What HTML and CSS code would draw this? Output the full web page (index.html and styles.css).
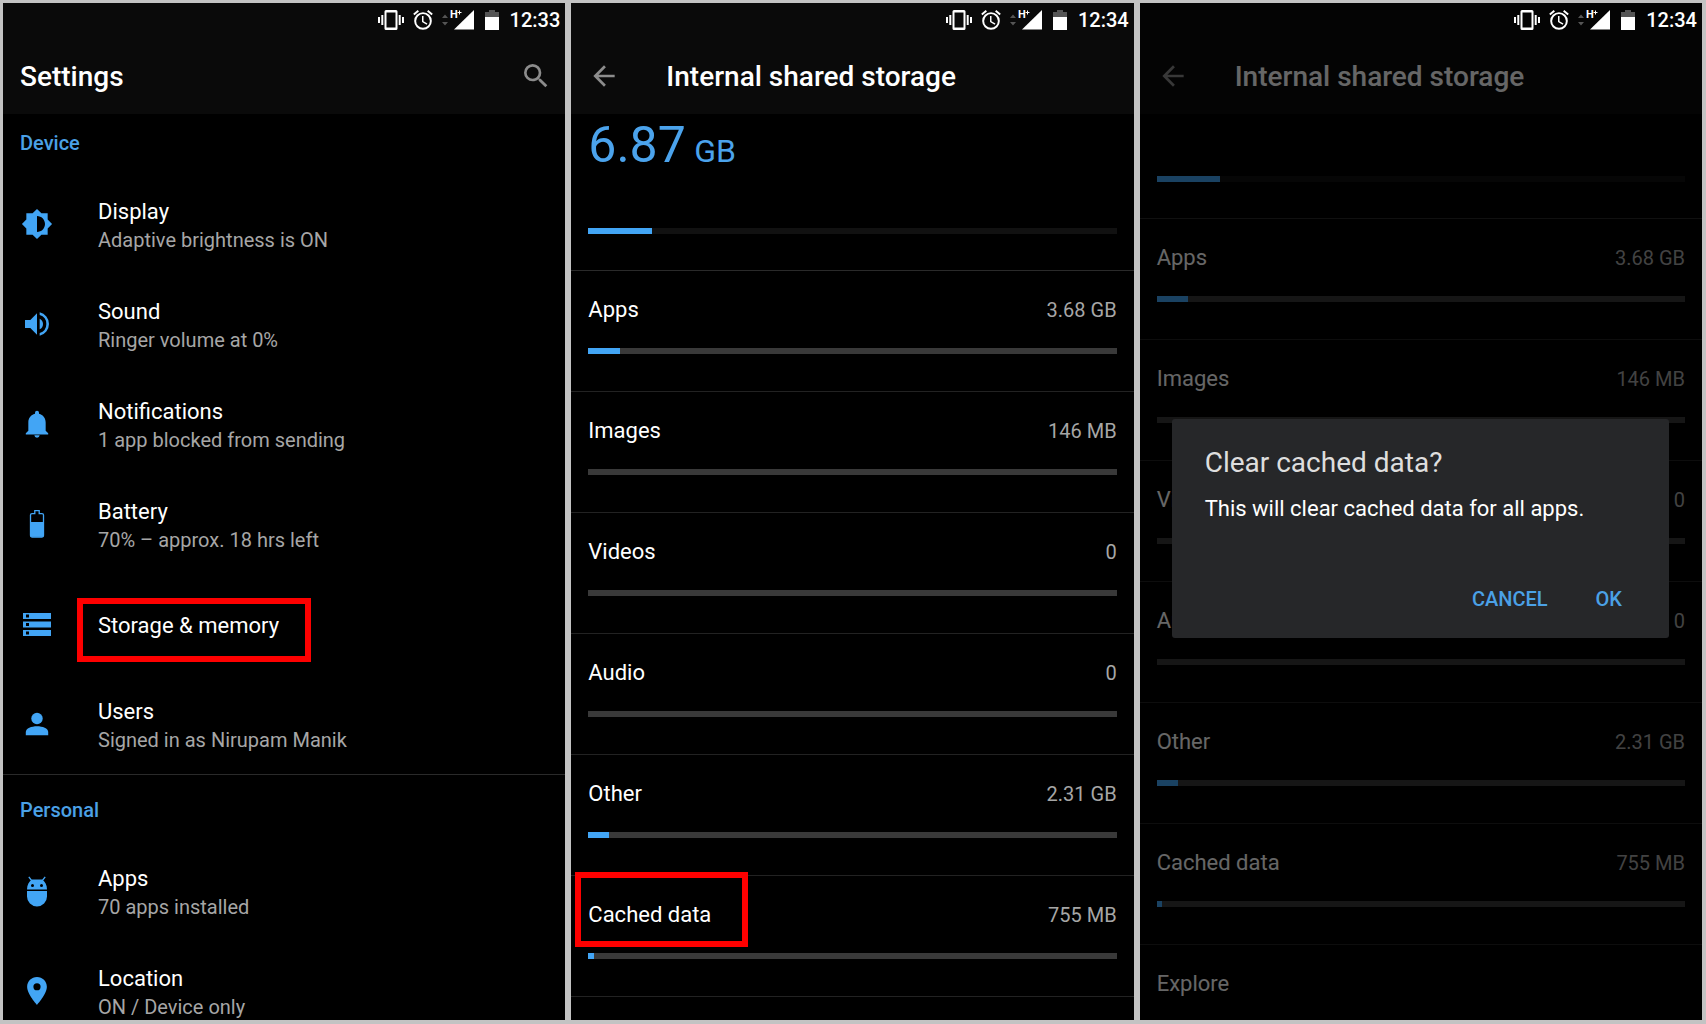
FILE: index.html
```html
<!DOCTYPE html>
<html lang="en">
<head>
    <meta charset="UTF-8">
    <meta name="viewport" content="width=device-width, initial-scale=1.0">
    <title>Clear cached data</title>
    <link rel="stylesheet" href="styles.css">
</head>
<body>
    <!-- Shared status bar icons -->
    <svg class="sprite" aria-hidden="true">
        <symbol id="vibrate" viewBox="0 0 26 20">
            <path fill="currentColor" fill-rule="evenodd" d="M8 0h10a1.500 1.500 0 0 1 1.500 1.500v17a1.500 1.500 0 0 1-1.500 1.500H8a1.500 1.500 0 0 1-1.500-1.500v-17A1.500 1.500 0 0 1 8 0zM8.500 2.500v15h9v-15z"/>
            <path fill="currentColor" d="M0 7h2v6H0zM3.300 5h2v10h-2zM20.700 5h2v10h-2zM24 7h2v6h-2z"/>
        </symbol>
        <symbol id="alarm" viewBox="2 1.800 20 20.400">
            <path fill="currentColor" d="M22 5.720l-4.600-3.860-1.290 1.530 4.600 3.860L22 5.720zM7.880 3.390L6.600 1.860 2 5.710l1.290 1.530 4.590-3.850zM12.500 8H11v6l4.750 2.850.75-1.230-4-2.370V8zM12 4a9 9 0 1 0 0 18 9 9 0 0 0 0-18zm0 16a7 7 0 1 1 0-14 7 7 0 0 1 0 14z"/>
        </symbol>
        <symbol id="signal" viewBox="0 0 32 20">
            <path fill="#555" d="M0 8l3-3.500L6 8zM0 12l3 3.500L6 12z"/>
            <path fill="currentColor" d="M32 0v19.500H12z"/>
            <text class="network" x="8" y="8">H</text>
            <path stroke="currentColor" stroke-width="1" d="M15.500 2.500h4M17.500 .5v4"/>
        </symbol>
        <symbol id="charge" viewBox="0 0 14 20">
            <path fill="#555" d="M4 0h6v2h4v5H0V2h4z"/>
            <path fill="currentColor" d="M0 7h14v13H0z"/>
        </symbol>
        <symbol id="back" viewBox="0 0 24 24">
            <path fill="currentColor" d="M20 11H7.830l5.590-5.590L12 4l-8 8 8 8 1.410-1.410L7.830 13H20v-2z"/>
        </symbol>
    </svg>

    <!-- Settings -->
    <section class="screen">
        <div class="status">
            <svg class="vibrate"><use href="#vibrate"/></svg>
            <svg class="alarm"><use href="#alarm"/></svg>
            <svg class="signal"><use href="#signal"/></svg>
            <svg class="charge"><use href="#charge"/></svg>
            <time class="clock">12:33</time>
        </div>
        <header class="appbar">
            <h1 class="title">Settings</h1>
            <button class="icon-button" aria-label="Search">
                <svg class="icon" viewBox="0 0 24 24"><path fill="currentColor" d="M15.500 14h-.79l-.28-.27A6.470 6.470 0 0 0 16 9.500 6.500 6.500 0 1 0 9.500 16c1.610 0 3.090-.59 4.230-1.570l.27.28v.79l5 4.990L20.490 19l-4.990-5zm-6 0a4.500 4.500 0 1 1 0-9 4.500 4.500 0 0 1 0 9z"/></svg>
            </button>
        </header>

        <div class="group">
            <h2 class="group-title">Device</h2>
            <a class="item" href="#display">
                <svg class="icon" viewBox="0 0 24 24"><path fill="currentColor" d="M20 15.310L23.310 12 20 8.690V4h-4.690L12 .69 8.690 4H4v4.690L.69 12 4 15.310V20h4.690L12 23.310 15.310 20H20v-4.690zM12 18V6c3.310 0 6 2.690 6 6s-2.690 6-6 6z"/></svg>
                <span class="item-text">
                    <span class="name">Display</span>
                    <span class="detail">Adaptive brightness is ON</span>
                </span>
            </a>
            <a class="item" href="#sound">
                <svg class="icon" viewBox="0 0 24 24"><path fill="currentColor" d="M3 9v6h4l5 5V4L7 9H3zm13.500 3A4.500 4.500 0 0 0 14 7.970v8.050A4.500 4.500 0 0 0 16.500 12zM14 3.230v2.060a7 7 0 0 1 0 13.420v2.060a9 9 0 0 0 0-17.540z"/></svg>
                <span class="item-text">
                    <span class="name">Sound</span>
                    <span class="detail">Ringer volume at 0%</span>
                </span>
            </a>
            <a class="item" href="#notifications">
                <svg class="icon" viewBox="0 0 24 24"><path fill="currentColor" d="M12 22.300a2 2 0 0 0 2-1.800h-4a2 2 0 0 0 2 1.800zM18.500 17V10.800c0-3.200-1.900-5.700-5-6.500v-.7a1.500 1.500 0 0 0-3 0v.7c-3.100.8-5 3.300-5 6.500V17l-1.900 1.900v.9h16.800v-.9z"/></svg>
                <span class="item-text">
                    <span class="name">Notifications</span>
                    <span class="detail">1 app blocked from sending</span>
                </span>
            </a>
            <a class="item" href="#battery">
                <svg class="icon" viewBox="0 0 32 32">
                    <path fill="none" stroke="currentColor" stroke-width="1.300" d="M11 5.600h2.800V2.700h4.400v2.900H21a1.500 1.500 0 0 1 1.500 1.500v20.400a1.500 1.500 0 0 1-1.500 1.500H11a1.500 1.500 0 0 1-1.500-1.500V7.100A1.500 1.500 0 0 1 11 5.600z"/>
                    <path fill="currentColor" d="M9.500 14h13v14.800h-13z"/>
                </svg>
                <span class="item-text">
                    <span class="name">Battery</span>
                    <span class="detail">70% – approx. 18 hrs left</span>
                </span>
            </a>
            <a class="item" href="#storage">
                <svg class="icon" viewBox="0 0 32 32"><path fill="currentColor" fill-rule="evenodd" d="M2 5h28v6H2zm3 1.500v3h3v-3zM2 13.500h28v6H2zM5 15v3h3v-3zM2 22h28v6H2zm3 1.500v3h3v-3z"/></svg>
                <span class="item-text">
                    <span class="name">Storage &amp; memory</span>
                </span>
                <span class="marker marker-storage"></span>
            </a>
            <a class="item" href="#users">
                <svg class="icon" viewBox="0 0 32 32"><circle fill="currentColor" cx="16" cy="10.500" r="5.700"/><path fill="currentColor" d="M4.800 27.200V24c0-3.700 5.600-5.800 11.200-5.800S27.200 20.300 27.200 24v3.200z"/></svg>
                <span class="item-text">
                    <span class="name">Users</span>
                    <span class="detail">Signed in as Nirupam Manik</span>
                </span>
            </a>
        </div>

        <div class="group">
            <h2 class="group-title">Personal</h2>
            <a class="item" href="#apps">
                <svg class="icon" viewBox="0 0 32 32">
                    <path fill="currentColor" fill-rule="evenodd" d="M6 14.500C6 10 8 6.500 11 4.500h10c3 2 5 5.500 5 10zM10 10.500a1.500 1.500 0 1 0 3 0 1.500 1.500 0 0 0-3 0zm9 0a1.500 1.500 0 1 0 3 0 1.500 1.500 0 0 0-3 0z"/>
                    <path stroke="currentColor" stroke-width="1.300" d="M11 6L7.800 1.800M21 6l3.200-4.200"/>
                    <path fill="currentColor" d="M6 16h20v5.500a10 10 0 0 1-20 0z"/>
                </svg>
                <span class="item-text">
                    <span class="name">Apps</span>
                    <span class="detail">70 apps installed</span>
                </span>
            </a>
            <a class="item" href="#location">
                <svg class="icon" viewBox="0 0 24 24"><path fill="currentColor" d="M12 1.500c-4.100 0-7.400 3.200-7.400 7.300C4.600 14.300 12 22.400 12 22.400s7.400-8.100 7.400-13.600c0-4.100-3.300-7.300-7.400-7.300zm0 10a2.700 2.700 0 1 1 0-5.400 2.700 2.700 0 0 1 0 5.400z"/></svg>
                <span class="item-text">
                    <span class="name">Location</span>
                    <span class="detail">ON / Device only</span>
                </span>
            </a>
        </div>
    </section>

    <!-- Internal shared storage -->
    <section class="screen">
        <div class="status">
            <svg class="vibrate"><use href="#vibrate"/></svg>
            <svg class="alarm"><use href="#alarm"/></svg>
            <svg class="signal"><use href="#signal"/></svg>
            <svg class="charge"><use href="#charge"/></svg>
            <time class="clock">12:34</time>
        </div>
        <header class="appbar">
            <button class="icon-button" aria-label="Back"><svg class="icon"><use href="#back"/></svg></button>
            <h1 class="title">Internal shared storage</h1>
        </header>

        <div class="summary">
            <div class="total">6.87 <span class="unit">GB</span></div>
            <div class="bar bar-total"><div class="fill" style="width: 12%"></div></div>
        </div>
        <a class="usage" href="#apps-usage">
            <span class="usage-line"><span class="name">Apps</span><span class="size">3.68 GB</span></span>
            <div class="bar"><div class="fill" style="width: 6%"></div></div>
        </a>
        <a class="usage" href="#images-usage">
            <span class="usage-line"><span class="name">Images</span><span class="size">146 MB</span></span>
            <div class="bar"></div>
        </a>
        <a class="usage" href="#videos-usage">
            <span class="usage-line"><span class="name">Videos</span><span class="size">0</span></span>
            <div class="bar"></div>
        </a>
        <a class="usage" href="#audio-usage">
            <span class="usage-line"><span class="name">Audio</span><span class="size">0</span></span>
            <div class="bar"></div>
        </a>
        <a class="usage" href="#other-usage">
            <span class="usage-line"><span class="name">Other</span><span class="size">2.31 GB</span></span>
            <div class="bar"><div class="fill" style="width: 4%"></div></div>
        </a>
        <a class="usage" href="#cached-usage">
            <span class="usage-line"><span class="name">Cached data</span><span class="size">755 MB</span></span>
            <div class="bar"><div class="fill" style="width: 1%"></div></div>
            <span class="marker marker-cached"></span>
        </a>
    </section>

    <!-- Internal shared storage with the confirm dialog -->
    <section class="screen">
        <div class="status">
            <svg class="vibrate"><use href="#vibrate"/></svg>
            <svg class="alarm"><use href="#alarm"/></svg>
            <svg class="signal"><use href="#signal"/></svg>
            <svg class="charge"><use href="#charge"/></svg>
            <time class="clock">12:34</time>
        </div>
        <header class="appbar">
            <button class="icon-button" aria-label="Back"><svg class="icon"><use href="#back"/></svg></button>
            <h1 class="title">Internal shared storage</h1>
        </header>

        <div class="summary summary-scrolled">
            <div class="bar bar-total"><div class="fill" style="width: 12%"></div></div>
        </div>
        <a class="usage" href="#apps-usage">
            <span class="usage-line"><span class="name">Apps</span><span class="size">3.68 GB</span></span>
            <div class="bar"><div class="fill" style="width: 6%"></div></div>
        </a>
        <a class="usage" href="#images-usage">
            <span class="usage-line"><span class="name">Images</span><span class="size">146 MB</span></span>
            <div class="bar"></div>
        </a>
        <a class="usage" href="#videos-usage">
            <span class="usage-line"><span class="name">Videos</span><span class="size">0</span></span>
            <div class="bar"></div>
        </a>
        <a class="usage" href="#audio-usage">
            <span class="usage-line"><span class="name">Audio</span><span class="size">0</span></span>
            <div class="bar"></div>
        </a>
        <a class="usage" href="#other-usage">
            <span class="usage-line"><span class="name">Other</span><span class="size">2.31 GB</span></span>
            <div class="bar"><div class="fill" style="width: 4%"></div></div>
        </a>
        <a class="usage" href="#cached-usage">
            <span class="usage-line"><span class="name">Cached data</span><span class="size">755 MB</span></span>
            <div class="bar"><div class="fill" style="width: 1%"></div></div>
        </a>
        <a class="usage" href="#explore">
            <span class="usage-line"><span class="name">Explore</span></span>
        </a>

        <div class="modal">
            <div class="modal-content" role="dialog" aria-labelledby="clear-title">
                <h2 class="modal-title" id="clear-title">Clear cached data?</h2>
                <p class="modal-text">This will clear cached data for all apps.</p>
                <div class="modal-actions">
                    <button class="button">CANCEL</button>
                    <button class="button">OK</button>
                </div>
            </div>
        </div>
    </section>
</body>
</html>
```
FILE: styles.css
```css
* {
    box-sizing: border-box;
}
body {
    display: grid;
    grid-template-columns: repeat(3, 1fr);
    gap: 6px;
    height: 100vh;
    margin: 0;
    padding: 3px 4px 4px 3px;
    background-color: #c3c3c3;
    color: white;
    font-family: Roboto, sans-serif;
}
h1, h2, p {
    margin: 0;
}
a {
    color: inherit;
    text-decoration: none;
}
button {
    padding: 0;
    border: none;
    background: none;
    font-family: inherit;
    cursor: pointer;
}
.sprite {
    position: absolute;
    width: 0;
    height: 0;
}
.screen {
    position: relative;
    min-height: 0;
    overflow: hidden;
    background-color: black;
}

/* Status bar */
.status {
    position: relative;
    display: flex;
    align-items: center;
    justify-content: flex-end;
    height: 35px;
    padding: 0 5px 1px 0;
    background-color: #0a0a0a;
}
.vibrate {
    width: 26px;
    height: 20px;
    margin-right: 9px;
}
.alarm {
    width: 20px;
    height: 20px;
    margin-right: 9px;
}
.signal {
    width: 32px;
    height: 20px;
    margin-right: 11px;
}
.charge {
    width: 14px;
    height: 20px;
    margin-right: 11px;
}
.network {
    fill: currentColor;
    font-size: 11px;
    font-weight: 700;
}
.clock {
    font-size: 20px;
    font-weight: 500;
    line-height: 24px;
}

/* App bar */
.appbar {
    display: flex;
    align-items: center;
    height: 76px;
    padding: 0 13px 0 17px;
    background-color: #0a0a0a;
}
.title {
    flex: 1;
    padding-top: 2px;
    font-size: 28px;
    font-weight: 500;
    line-height: 36px;
}
.icon {
    display: block;
    flex: none;
    width: 32px;
    height: 32px;
}
.icon-button {
    color: #8c8c8c;
}
.icon-button + .title {
    margin-left: 46px;
}

/* Settings list */
.group + .group {
    padding-top: 6px;
    border-top: 1px solid #2a2a2a;
}
.group-title {
    height: 60px;
    padding: 15px 17px;
    color: #4ba1e6;
    font-size: 20px;
    font-weight: 500;
    line-height: 28px;
}
.item {
    position: relative;
    display: flex;
    align-items: center;
    gap: 45px;
    height: 100px;
    padding: 0 18px;
}
.item .icon {
    color: #42a5f5;
}
.item-text {
    display: flex;
    flex-direction: column;
    padding-top: 4px;
}
.name {
    font-size: 22px;
    line-height: 28px;
}
.detail {
    color: #a6a6a6;
    font-size: 20px;
    line-height: 28px;
}

/* Storage usage */
.summary {
    padding: 0 17px 36px;
    border-bottom: 1px solid #2a2a2a;
}
.summary-scrolled {
    padding-top: 62px;
}
.total {
    height: 62px;
    margin-bottom: 52px;
    color: #4ba3ec;
    font-size: 50px;
    line-height: 62px;
}
.unit {
    margin-left: -4px;
    font-size: 32px;
    line-height: 1;
}
.bar {
    height: 6px;
    background-color: #393939;
}
.bar-total {
    background-color: #111;
}
.fill {
    height: 100%;
    background-color: #42a5f5;
}
.usage {
    position: relative;
    display: block;
    padding: 25px 17px 37px;
    border-bottom: 1px solid #222;
}
.usage-line {
    display: flex;
    justify-content: space-between;
    margin-bottom: 24px;
}
.size {
    color: #a6a6a6;
    font-size: 20px;
    line-height: 28px;
}

/* Red highlight boxes */
.marker {
    position: absolute;
    border: 6px solid #fe0000;
}
.marker-storage {
    top: 24px;
    left: 74px;
    width: 234px;
    height: 64px;
}
.marker-cached {
    top: -4px;
    left: 4px;
    width: 173px;
    height: 75px;
}

/* Modal */
.modal {
    position: absolute;
    inset: 0;
    display: flex;
    align-items: center;
    padding: 34px 33px 0 32px;
    background-color: rgba(0, 0, 0, 0.6);
}
/* the status icons stay bright above the scrim */
.status {
    z-index: 1;
}
.screen:has(.modal) .status {
    background-color: #040404;
}
.modal-content {
    flex: 1;
    padding: 26px 33px 21px;
    border-radius: 3px;
    background-color: #262729;
}
.modal-title {
    color: #dedede;
    font-size: 28px;
    font-weight: 400;
    line-height: 36px;
}
.modal-text {
    margin-top: 14px;
    font-size: 22px;
    line-height: 28px;
}
.modal-actions {
    display: flex;
    justify-content: flex-end;
    gap: 48px;
    margin-top: 58px;
    padding-right: 14px;
}
.button {
    color: #4ba1e6;
    font-size: 20px;
    font-weight: 500;
    line-height: 36px;
}
```
